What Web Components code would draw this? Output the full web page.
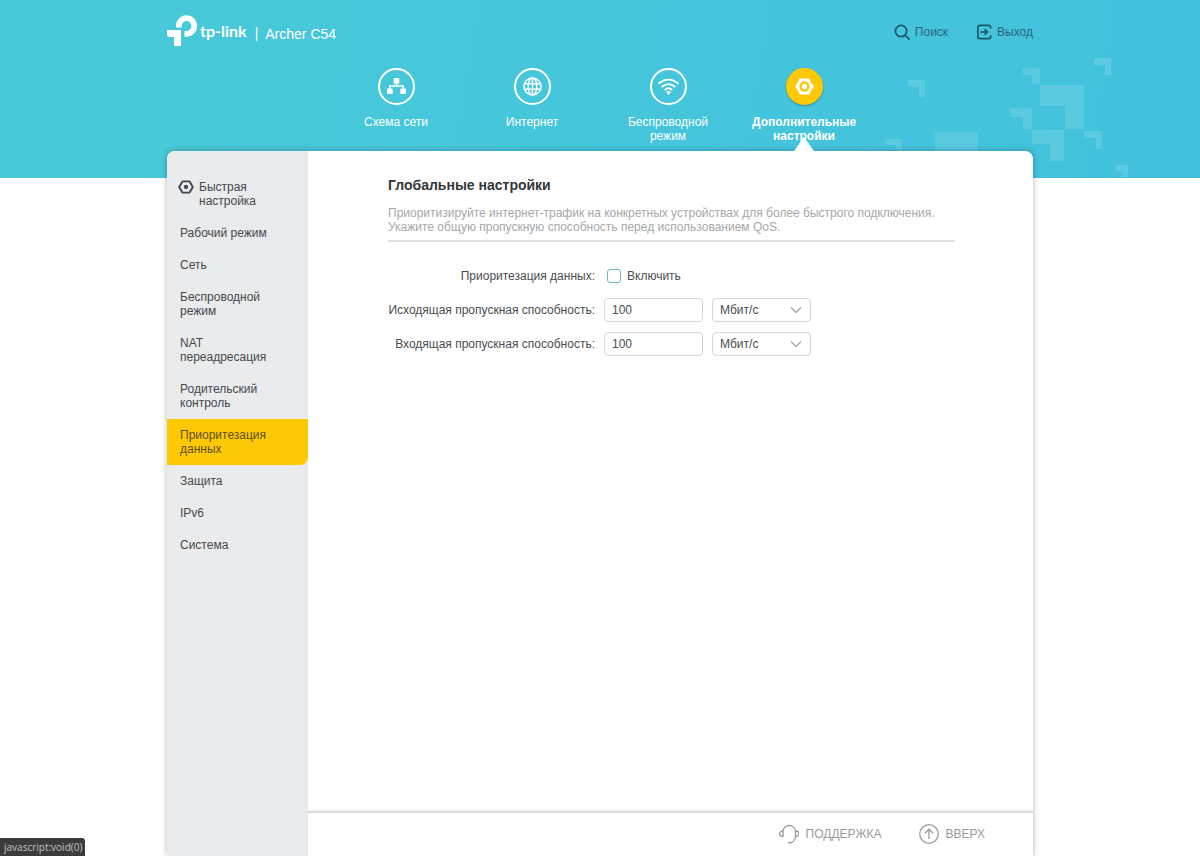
<!DOCTYPE html>
<html lang="ru">
<head>
<meta charset="utf-8">
<meta name="viewport" content="width=device-width, initial-scale=1">
<title>Archer C54</title>
<style>
  body { margin: 0; background: #fff; color: #4a4d50; font: 12px/14px "Liberation Sans", Arial, sans-serif; }
</style>
</head>
<body>
<tp-page>
  <tp-banner slot="banner" model="Archer C54"></tp-banner>
  <tp-nav slot="banner">
    <tp-nav-item icon="map">Схема сети</tp-nav-item>
    <tp-nav-item icon="globe">Интернет</tp-nav-item>
    <tp-nav-item icon="wifi">Беспроводной режим</tp-nav-item>
    <tp-nav-item icon="gear" active>Дополнительные настройки</tp-nav-item>
  </tp-nav>
  <tp-menu slot="side">
    <tp-menu-item icon>Быстрая настройка</tp-menu-item>
    <tp-menu-item>Рабочий режим</tp-menu-item>
    <tp-menu-item>Сеть</tp-menu-item>
    <tp-menu-item>Беспроводной режим</tp-menu-item>
    <tp-menu-item>NAT переадресация</tp-menu-item>
    <tp-menu-item>Родительский контроль</tp-menu-item>
    <tp-menu-item active>Приоритезация данных</tp-menu-item>
    <tp-menu-item>Защита</tp-menu-item>
    <tp-menu-item>IPv6</tp-menu-item>
    <tp-menu-item>Система</tp-menu-item>
  </tp-menu>
  <tp-section heading="Глобальные настройки">
    <span slot="note">Приоритизируйте интернет-трафик на конкретных устройствах для более быстрого подключения. Укажите общую пропускную способность перед использованием QoS.</span>
    <tp-toggle-row label="Приоритезация данных:" option="Включить"></tp-toggle-row>
    <tp-speed-row label="Исходящая пропускная способность:" value="100"></tp-speed-row>
    <tp-speed-row label="Входящая пропускная способность:" value="100"></tp-speed-row>
  </tp-section>
  <tp-footer slot="footer"></tp-footer>
</tp-page>
<tp-status>javascript:void(0)</tp-status>

<script>
const define = (name, render) => customElements.define(name, class extends HTMLElement {
  constructor() {
    super();
    this.attachShadow({ mode: 'open' });
  }
  connectedCallback() {
    const t = document.createElement('template');
    t.innerHTML = render(this);
    this.shadowRoot.replaceChildren(t.content.cloneNode(true));
  }
});

const gear = `<path d="M5.500 3h9l4 7-4 7h-9l-4-7z" fill="none" stroke="currentColor" stroke-width="2.400" stroke-linejoin="round"/><circle cx="10" cy="10" r="2.700" fill="currentColor"/>`;
const icons = {
  map: `<g fill="currentColor"><rect x="7" y="1" width="6" height="6" rx="1"/><rect x="0" y="12" width="6" height="6" rx="1"/><rect x="14" y="12" width="6" height="6" rx="1"/></g><path d="M10 5v4M3 14V9.500h14V14" fill="none" stroke="currentColor" stroke-width="1.600"/>`,
  globe: `<g fill="none" stroke="currentColor" stroke-width="1.600"><circle cx="10" cy="10" r="9"/><ellipse cx="10" cy="10" rx="4.500" ry="9"/><path d="M10 1v18M1.500 7h17M1.500 13h17"/></g>`,
  wifi: `<g fill="none" stroke="currentColor" stroke-width="2"><path d="M-.5 7Q10-1.500 20.500 7M2.800 10.500Q10 4.500 17.200 10.500M6 13.800Q10 10 14 13.800"/></g><path d="M7.200 15.800Q10 13.600 12.800 15.800L10 18.800z" fill="currentColor"/>`,
  gear: `<path d="M4.800 1.500h10.400L16.600 5 20 10l-3.400 5-1.400 3.500H4.800L3.400 15 0 10l3.400-5z" fill="currentColor"/><circle cx="10" cy="10" r="5.400" fill="#fdc907"/><circle cx="10" cy="10" r="2.800" fill="currentColor"/>`
};

define('tp-page', () => `
<style>
  :host { display: flex; flex-direction: column; min-height: 100vh; }
  header { position: relative; box-sizing: border-box; min-height: 178px; padding: 0 16px 27px;
    background: linear-gradient(100deg, #48c9d8 10%, #45c5dc 60%, #42c1dd); }
  .pixels { position: absolute; right: 0; bottom: 0; width: 330px; height: 138px; fill: #fff; }
  .wrap { position: relative; max-width: 866px; margin: 0 auto; }
  .card { position: relative; box-sizing: border-box; flex: 1; display: flex; width: calc(100% - 32px); max-width: 866px;
    margin: -27px auto 0; background: #fff; border-radius: 8px 8px 0 0; box-shadow: 0 0 6px rgba(0,0,0,.28); }
  aside { flex: 0 0 141px; background: #e9ebec; border-radius: 8px 0 0 0; }
  .body { flex: 1; min-width: 0; display: flex; flex-direction: column; }
  main { flex: 1; }
</style>
<header>
  <svg class="pixels" viewBox="0 40 330 138" aria-hidden="true">
    <g transform="translate(0 40)">
      <g opacity=".13">
        <path d="M38 40h17v17h-6v-10h-11z"/><path d="M16 99h16v12h-6v-6h-10z"/>
        <path d="M153 28h17v16h-8v-9h-9z"/><path d="M140 68h22v21h-9v-12h-13z"/>
        <path d="M162 90h32v31h-14v-17h-18z"/>
        <path d="M214 91h18v18h-6v-11h-12z"/><path d="M246 125h12v12h-6v-6h-6z"/>
      </g>
      <path d="M65 92h43v19H65z" opacity=".12"/>
      <path d="M170 45h44v44h-19V66h-25z" opacity=".13"/>
      <path d="M224 18h17v17h-6v-10h-11z" opacity=".15"/>
    </g>
  </svg>
  <div class="wrap"><slot name="banner"></slot></div>
</header>
<div class="card">
  <aside><slot name="side"></slot></aside>
  <div class="body"><main><slot></slot></main><slot name="footer"></slot></div>
</div>`);

define('tp-banner', el => `
<style>
  :host { display: flex; justify-content: space-between; height: 68px; color: #fff; }
  .brand { display: flex; align-items: center; height: 30px; margin-top: 15px; font-size: 14px; }
  .brand svg { width: 31px; height: 32px; margin-right: 2px; }
  .name { margin-top: 2px; font: 700 16px/24px Lato, sans-serif; }
  .bar { margin: 6px 7px 0 8px; }
  .model { margin-top: 7px; }
  .tools { display: flex; gap: 28px; align-items: center; height: 20px; margin-top: 22px; }
  a { display: flex; align-items: center; gap: 5px; color: #2b6779; text-decoration: none; }
  a svg { width: 16px; height: 16px; color: #1c5669; }
</style>
<div class="brand">
  <svg viewBox="0 0 31 32" aria-hidden="true"><path d="M0 16h14v16H7v-9H2a2 2 0 0 1-2-2z" fill="#fff"/><path d="M11.800 13.500V11a7.800 7.800 0 1 1 8 8.800h-2.300" fill="none" stroke="#fff" stroke-width="5.800"/></svg>
  <span class="name">tp-link</span><span class="bar">|</span><span class="model">${el.getAttribute('model')}</span>
</div>
<div class="tools">
  <a href="#search"><svg viewBox="0 0 17 17" fill="none" stroke="currentColor" stroke-width="1.800" stroke-linecap="round"><circle cx="7.500" cy="7.500" r="6"/><path d="M12 12l4 4"/></svg>Поиск</a>
  <a href="#logout"><svg viewBox="0 0 17 17" fill="none" stroke="currentColor" stroke-width="1.800"><path d="M15.500 5V3.500a2 2 0 0 0-2-2H4a2 2 0 0 0-2 2v10a2 2 0 0 0 2 2h9.500a2 2 0 0 0 2-2V12M4.500 8.500H12M9 5.500l3 3-3 3"/></svg>Выход</a>
</div>`);

define('tp-nav', () => `
<style>
  :host { display: block; }
  nav { display: grid; grid-template-columns: repeat(4, minmax(0, 136px)); justify-content: center; }
</style>
<nav><slot></slot></nav>`);

define('tp-nav-item', el => `
<style>
  :host { display: block; }
  a { position: relative; display: flex; flex-direction: column; align-items: center; gap: 10px; height: 83px; color: #fff; text-align: center; text-decoration: none; }
  .disc { box-sizing: border-box; flex: none; display: grid; place-items: center; width: 37px; height: 37px; border: 2px solid #fff; border-radius: 50%; }
  .disc svg { width: 19px; height: 19px; overflow: visible; }
  .text { width: 104px; }
  :host([active]) .disc { border-color: #fdc907; background: #fdc907; box-shadow: 0 1px 2px rgba(0,0,0,.3); }
  :host([active]) .text { font-weight: bold; }
  :host([active]) a::after { content: ""; position: absolute; z-index: 1; left: calc(50% - 10px); bottom: 0; width: 20px; height: 14px; background: #fff; clip-path: polygon(50% 0, 100% 100%, 0 100%); }
</style>
<a href="#${el.getAttribute('icon')}">
  <span class="disc"><svg viewBox="0 0 20 20" aria-hidden="true">${icons[el.getAttribute('icon')]}</svg></span>
  <span class="text"><slot></slot></span>
</a>`);

define('tp-menu', () => `
<style>:host { display: block; padding-top: 20px; }</style>
<nav><slot></slot></nav>`);

define('tp-menu-item', el => `
<style>
  :host { display: block; }
  a { display: flex; gap: 5px; padding: 9px 32px 9px 13px; color: #45494c; text-decoration: none; }
  svg { flex: none; width: 16px; height: 16px; margin-top: -1px; }
  :host([icon]) a { padding-left: 11px; }
  :host([active]) a { background: #fdc907; color: #5f4f1c; border-radius: 0 0 8px 0; }
</style>
<a href="#menu">${el.hasAttribute('icon') ? `<svg viewBox="0 0 20 20" aria-hidden="true">${gear}</svg>` : ''}<span><slot></slot></span></a>`);

define('tp-section', el => `
<style>
  :host { display: block; padding: 26px 78px 26px 80px; }
  h2 { margin: 0; color: #33373a; font-size: 14px; line-height: 16px; }
  p { margin: 13px 0 22px; padding-bottom: 6px; border-bottom: 2px solid #e0e0e0; color: #a6a8a9; }
  .rows { display: flex; flex-direction: column; gap: 10px; }
</style>
<h2>${el.getAttribute('heading')}</h2>
<p><slot name="note"></slot></p>
<div class="rows"><slot></slot></div>`);

const rowStyle = `
  :host { display: flex; align-items: center; height: 24px; }
  .label { flex: 0 0 207px; margin-right: 9px; text-align: right; }
`;

define('tp-toggle-row', el => `
<style>${rowStyle}
  .option { display: flex; align-items: center; gap: 6px; margin-left: 3px; }
  input { appearance: none; box-sizing: border-box; width: 14px; height: 14px; margin: 0; border: 1px solid #6ab9bd; border-radius: 3px; background: #fff; }
  input:checked { background: #4acbd6; }
</style>
<label class="label" for="on">${el.getAttribute('label')}</label>
<label class="option"><input id="on" type="checkbox">${el.getAttribute('option')}</label>`);

define('tp-speed-row', el => `
<style>${rowStyle}
  input, select { appearance: none; box-sizing: border-box; width: 99px; height: 24px; margin: 0; padding: 0 7px; border: 1px solid #d4d5d6; border-radius: 4px; background: #fff; color: inherit; font: inherit; }
  .pick { position: relative; margin-left: 9px; }
  select { display: block; padding-right: 28px; }
  svg { position: absolute; right: 9px; top: 8px; width: 12px; height: 8px; pointer-events: none; }
</style>
<label class="label" for="speed">${el.getAttribute('label')}</label>
<input id="speed" type="text" value="${el.getAttribute('value')}">
<span class="pick">
  <select aria-label="Единица измерения"><option>Мбит/с</option><option>Кбит/с</option></select>
  <svg viewBox="0 0 12 8" fill="none" stroke="#a5a7a8" stroke-width="1.300" aria-hidden="true"><path d="M1 1.500l5 5 5-5"/></svg>
</span>`);

define('tp-footer', () => `
<style>
  :host { display: flex; justify-content: flex-end; align-items: center; gap: 37px; box-sizing: border-box; height: 45px; padding: 0 48px 2px 0; border-top: 2px solid #dcdcdc; box-shadow: 0 -1px 3px rgba(0,0,0,.08); }
  a { display: flex; align-items: center; gap: 7px; color: #999b9c; text-decoration: none; }
  svg { width: 20px; height: 20px; }
</style>
<a href="#support"><svg viewBox="0 0 20 20" fill="none" stroke="currentColor" stroke-width="1.300" aria-hidden="true"><path d="M4 13V7a6.300 6.300 0 0 1 12.500 0v6M4 7C-.5 7-.5 12.500 4 12.500M16.500 7c4.500 0 4.500 5.500 0 5.500 0 4-3 6.500-7.500 6.500"/></svg>ПОДДЕРЖКА</a>
<a href="#top"><svg viewBox="0 0 20 20" fill="none" stroke="currentColor" stroke-width="1.300" aria-hidden="true"><circle cx="10" cy="10" r="9.300"/><path d="M10 15V5.500M6 9.200l4-4 4 4"/></svg>ВВЕРХ</a>`);

define('tp-status', () => `
<style>
  :host { position: fixed; left: 0; bottom: 0; box-sizing: border-box; height: 18px; padding: 1px 3px 0 4px; background: #3b3b3b; color: #c4c4c4; border-radius: 0 3px 0 0; font: 10px/17px "Open Sans", sans-serif; }
</style><slot></slot>`);
</script>
</body>
</html>
